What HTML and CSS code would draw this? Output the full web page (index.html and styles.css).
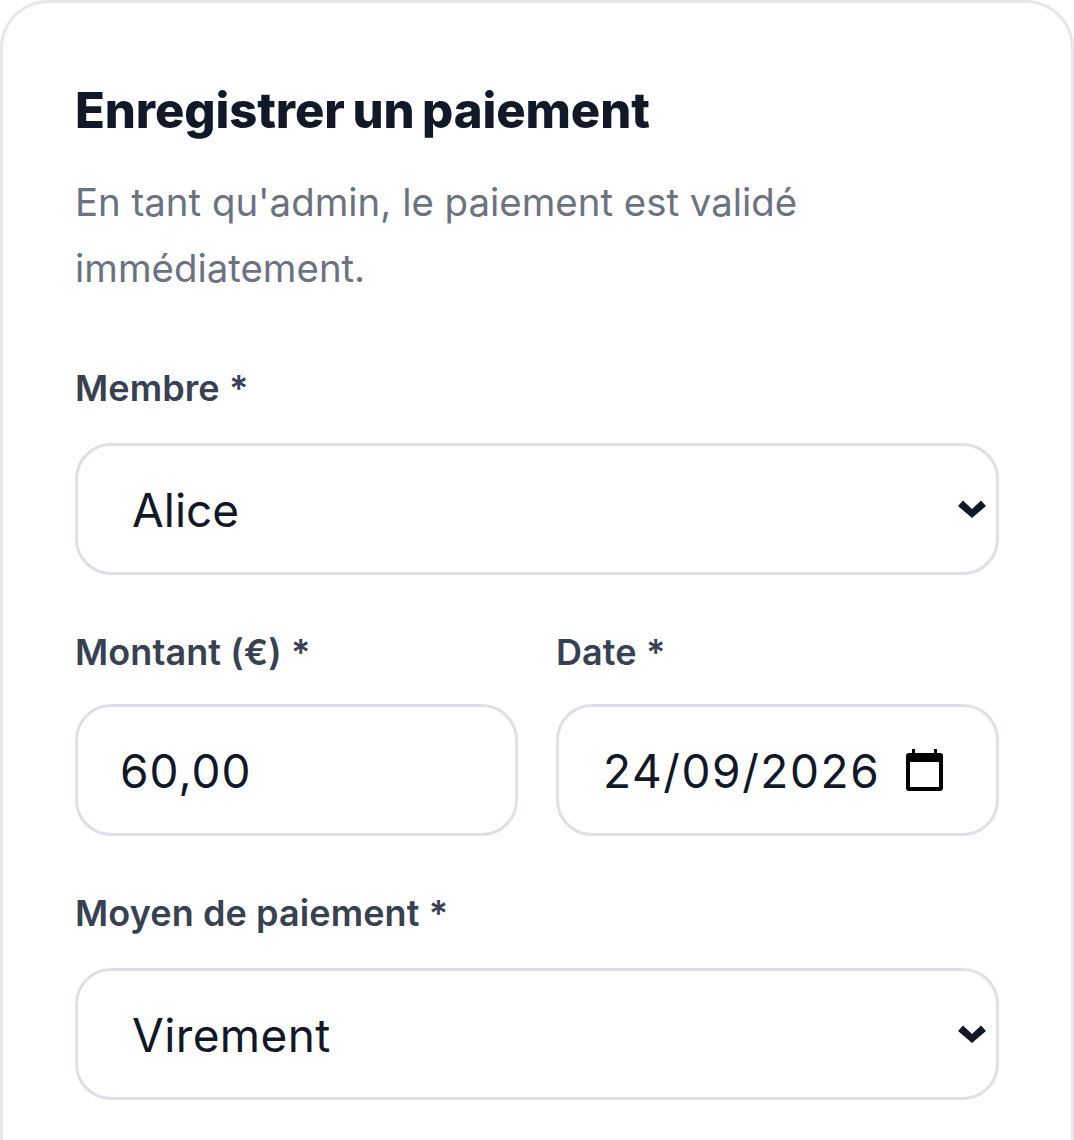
FILE: index.html
```html
<!DOCTYPE html>
<html lang="fr">
<head>
<meta charset="utf-8">
<title>Enregistrer un paiement</title>
<link rel="stylesheet" href="styles.css">
</head>
<body>
<section class="card">
  <h2 class="title">Enregistrer un paiement</h2>
  <p class="intro">En tant qu'admin, le paiement est validé immédiatement.</p>
  <div class="form">
    <div class="field">
      <div class="label">Membre *</div>
      <div class="control select"><span class="value">Alice</span>
        <svg class="chev" viewBox="0 0 28 18"><path d="M0 6L5 .5l9 8.5 9-8.5L28 6 14 18z" fill="#111827"/></svg>
      </div>
    </div>
    <div class="row">
      <div class="field">
        <div class="label">Montant (€) *</div>
        <div class="control plain"><span class="value amount">60,00</span></div>
      </div>
      <div class="field">
        <div class="label">Date *</div>
        <div class="control date"><span class="value day">24/09/2026</span>
          <svg class="cal" viewBox="0 0 37 42"><path d="M3 4h31a3 3 0 0 1 3 3v32a3 3 0 0 1-3 3H3a3 3 0 0 1-3-3V7a3 3 0 0 1 3-3zm1 9v25h29V13z" fill="#000" fill-rule="evenodd"/><path d="M6 0h3v6H6zM28 0h3v6h-3z" fill="#000"/></svg>
        </div>
      </div>
    </div>
    <div class="field">
      <div class="label">Moyen de paiement *</div>
      <div class="control select"><span class="value wide">Virement</span>
        <svg class="chev" viewBox="0 0 28 18"><path d="M0 6L5 .5l9 8.5 9-8.5L28 6 14 18z" fill="#111827"/></svg>
      </div>
    </div>
  </div>
</section>
</body>
</html>
```
FILE: styles.css
```css
html, body { margin: 0; padding: 0; background: #fff; }
body { width: 1074px; height: 1140px; overflow: hidden; font-family: Inter, "Liberation Sans", sans-serif; }
.card { box-sizing: border-box; width: 1074px; height: 1140px; padding: 74px 72px 0; border: 3px solid #e5e7eb; border-bottom: 0; border-radius: 48px 48px 0 0; background: #fff; }
.title { margin: 0; font-size: 49px; line-height: 68px; font-weight: 800; color: #111827; letter-spacing: -0.1px; word-spacing: -3px; }
.intro { margin: 24px 0 0; font-size: 38.4px; line-height: 66px; color: #6b7280; width: 800px; }
.form { display: flex; flex-direction: column; gap: 52px; margin-top: 62px; }
.field { display: flex; flex-direction: column; flex: 1; min-width: 0; }
.label { font-size: 36px; line-height: 50px; font-weight: 600; color: #374151; letter-spacing: 0.1px; }
.control { box-sizing: border-box; height: 132px; border: 3px solid #dfe0e6; border-radius: 36px; display: flex; align-items: center; color: #111827; font-size: 46px; }
.value { margin-top: 1px; }
.select { margin-top: 30px; padding: 0 10px 0 54px; justify-content: space-between; }
.plain { margin-top: 27px; padding: 0 42px; }
.date { margin-top: 27px; padding: 0 53px 0 44px; justify-content: space-between; }
.row { display: flex; gap: 38px; }
.amount { letter-spacing: 1px; }
.day { letter-spacing: 1.6px; }
.wide { letter-spacing: 0.4px; }
.chev { width: 28px; height: 18px; }
.cal { width: 37px; height: 42px; }
```
